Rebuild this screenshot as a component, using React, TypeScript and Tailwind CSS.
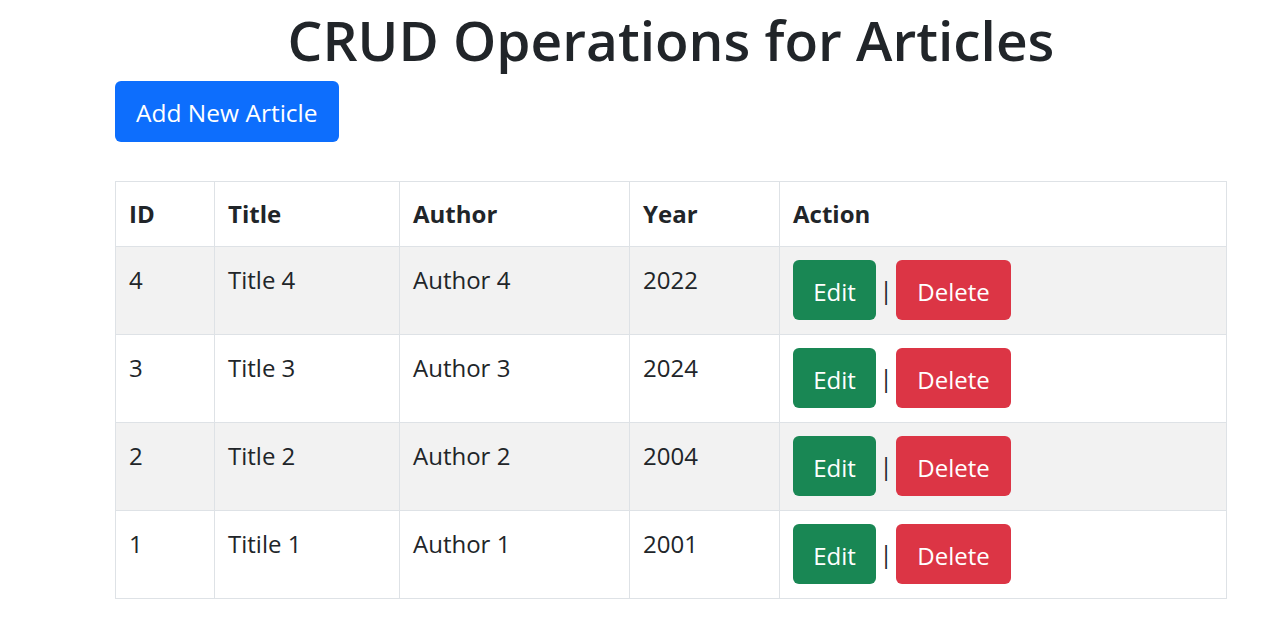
const articles = [
  { id: 4, title: "Title 4", author: "Author 4", year: 2022 },
  { id: 3, title: "Title 3", author: "Author 3", year: 2024 },
  { id: 2, title: "Title 2", author: "Author 2", year: 2004 },
  { id: 1, title: "Titile 1", author: "Author 1", year: 2001 },
];

const td = "border border-[#dee2e6] px-[13px] align-top";
const th = "border border-[#dee2e6] px-[13px] align-middle text-left font-bold";

export default function App() {
  return (
    <div className="min-h-screen bg-white text-[#212529] font-['Open_Sans',sans-serif]">
      <div className="ml-[115px] w-[1112px]">
        <h1 className="text-center text-[55px] font-semibold leading-[75px] pt-[2px]">CRUD Operations for Articles</h1>
        <button className="mt-[4px] h-[61px] rounded-[6px] bg-[#0d6efd] px-[21px] pt-[3px] text-[24.5px] text-white">Add New Article</button>
        <table className="mt-[39px] w-full border-collapse text-[24px]">
          <thead>
            <tr className="h-[65px]">
              <th className={`${th} w-[99px]`}>ID</th>
              <th className={`${th} w-[185px]`}>Title</th>
              <th className={`${th} w-[230px]`}>Author</th>
              <th className={`${th} w-[150px]`}>Year</th>
              <th className={th}>Action</th>
            </tr>
          </thead>
          <tbody>
            {articles.map((a, i) => (
              <tr key={a.id} className={`h-[88px] ${i % 2 === 0 ? "bg-[#f2f2f2]" : "bg-white"}`}>
                <td className={`${td} pt-[15px]`}>{a.id}</td>
                <td className={`${td} pt-[15px]`}>{a.title}</td>
                <td className={`${td} pt-[15px]`}>{a.author}</td>
                <td className={`${td} pt-[15px]`}>{a.year}</td>
                <td className={`${td} pt-[13px]`}>
                  <div className="flex items-center">
                    <button className="h-[60px] w-[83px] rounded-[6px] bg-[#198754] pt-[3px] text-white">Edit</button>
                    <span className="w-[20px] text-center text-[#212529]">|</span>
                    <button className="h-[60px] w-[115px] rounded-[6px] bg-[#dc3545] pt-[3px] text-white">Delete</button>
                  </div>
                </td>
              </tr>
            ))}
          </tbody>
        </table>
      </div>
    </div>
  );
}
